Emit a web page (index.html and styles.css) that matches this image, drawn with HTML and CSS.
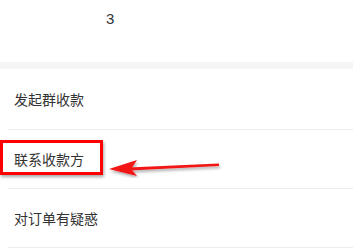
FILE: index.html
```html
<!DOCTYPE html>
<html lang="zh">
<head>
<meta charset="utf-8">
<link rel="stylesheet" href="styles.css">
</head>
<body>
<div class="page">
  <div class="top">
    <div class="cut">订单编号 · 交易快照 · 付款信息 · 物流详情 · 售后服务 · 申请记录</div>
    <div class="count">3</div>
  </div>
  <div class="gap"></div>
  <ul class="list">
    <li class="row">发起群收款</li>
    <li class="row">联系收款方</li>
    <li class="row">对订单有疑惑</li>
  </ul>
  <div class="highlight"></div>
  <svg class="arrow" width="120" height="24" viewBox="0 0 120 24">
    <defs>
      <filter id="sh" x="-20%" y="-50%" width="140%" height="200%">
        <feDropShadow dx="1" dy="2" stdDeviation="1.5" flood-color="#000" flood-opacity="0.35"/>
      </filter>
    </defs>
    <g filter="url(#sh)">
      <path d="M20 13.5 L110 9.5 L110 12 L20 16.5 Z" fill="#f21414"/>
      <path d="M0 15 L28 6 L22 15 L28 22 Z" fill="#f21414"/>
    </g>
  </svg>
</div>
</body>
</html>
```
FILE: styles.css
```css
html, body {
  margin: 0;
  padding: 0;
  background: #fff;
}
.page {
  position: relative;
  width: 353px;
  height: 248px;
  overflow: hidden;
  font-family: "Noto Sans CJK SC", "Noto Sans", sans-serif;
}
.top {
  height: 62px;
  display: flex;
  flex-direction: column;
  overflow: hidden;
}
.cut {
  margin-top: -15px;
  height: 14px;
  line-height: 14px;
  font-size: 13px;
  color: #c4c4c4;
  white-space: nowrap;
  padding-left: 14px;
  letter-spacing: 2px;
}
.count {
  margin-top: 13px;
  padding-left: 106px;
  font-family: "Liberation Sans", Arial, sans-serif;
  font-size: 15px;
  line-height: 14px;
  color: #333;
}
.gap {
  height: 7px;
  background: #f5f5f5;
}
.list {
  list-style: none;
  margin: 0;
  padding: 0 0 0 8px;
}
.row {
  height: 58px;
  display: flex;
  align-items: center;
  padding-left: 6px;
  border-bottom: 1px solid #ececec;
  font-size: 14px;
  color: #333;
}
.row:first-child {
  height: 60px;
}
.highlight {
  position: absolute;
  left: 0;
  top: 140px;
  width: 97px;
  height: 29px;
  border: 3px solid #f00;
  box-shadow: 1px 2px 3px rgba(0,0,0,0.35);
}
.arrow {
  position: absolute;
  left: 109px;
  top: 154px;
}
```
